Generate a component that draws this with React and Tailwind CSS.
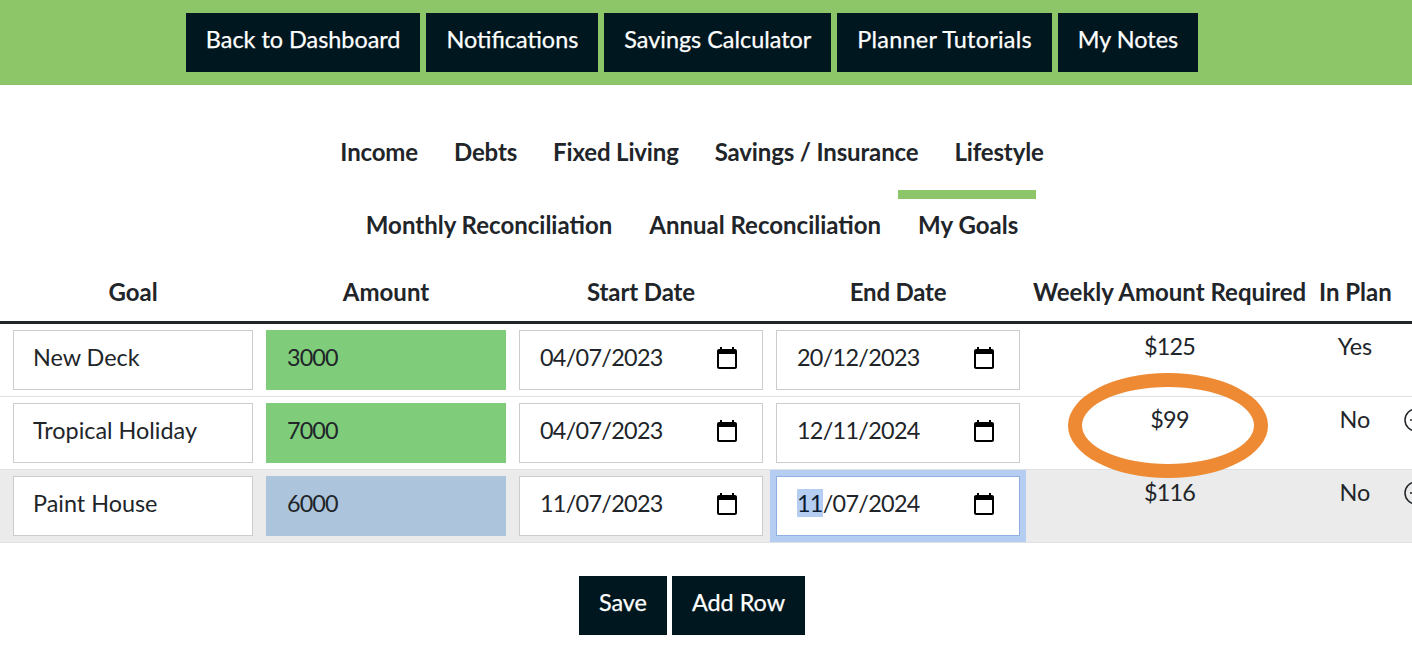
const navItems = ["Back to Dashboard", "Notifications", "Savings Calculator", "Planner Tutorials", "My Notes"];
const tabsOne = ["Income", "Debts", "Fixed Living", "Savings / Insurance", "Lifestyle"];
const tabsTwo = ["Monthly Reconciliation", "Annual Reconciliation", "My Goals"];
const columns = "grid grid-cols-[240px_240px_244px_244px_273px_72px_24px] gap-x-[13px] pl-[13px]";

const rows = [
  { goal: "New Deck", amount: "3000", amountBg: "bg-[#7fcd7b]", start: "04/07/2023", end: "20/12/2023", weekly: "$125", plan: "Yes" },
  { goal: "Tropical Holiday", amount: "7000", amountBg: "bg-[#7fcd7b]", start: "04/07/2023", end: "12/11/2024", weekly: "$99", plan: "No", removable: true },
  { goal: "Paint House", amount: "6000", amountBg: "bg-[#adc5dc]", start: "11/07/2023", end: "11/07/2024", weekly: "$116", plan: "No", removable: true, shaded: true, focused: true },
];

function CalendarIcon() {
  return (
    <svg viewBox="0 0 24 24" className="h-6 w-6 shrink-0" fill="#000" aria-hidden="true">
      <path d="M20 3h-1V1h-2v2H7V1H5v2H4c-1.1 0-2 .9-2 2v16c0 1.1.9 2 2 2h16c1.1 0 2-.9 2-2V5c0-1.1-.9-2-2-2zm0 18H4V8h16v13z" />
    </svg>
  );
}

function TextField({ value, bg = "bg-white border-[#ccc] pl-[19px]" }) {
  return (
    <div className={`flex h-[60px] items-center border pb-[6px] ${bg}`}>{value}</div>
  );
}

function DateField({ value, focused }) {
  return (
    <div
      className={`flex h-[60px] items-center justify-between border bg-white pb-[4px] pl-[20px] pr-[23px] ${
        focused ? "border-[#8fb0e0] shadow-[0_0_0_6px_#b5cdf0]" : "border-[#ccc]"
      }`}
    >
      {focused ? (
        <span className="mb-[2px] tracking-[-0.7px]">
          <span className="bg-[#b4cdf0] text-[#0a1a30]">11</span>/07/2024
        </span>
      ) : (
        <span className="mb-[2px] tracking-[-0.7px]">{value}</span>
      )}
      <CalendarIcon />
    </div>
  );
}

function DarkButton({ children, className = "" }) {
  return (
    <button className={`h-[59px] bg-[#00171f] px-[20px] pb-[8px] text-[23.4px] text-white [-webkit-text-stroke:0.25px_white] ${className}`}>{children}</button>
  );
}

export default function App() {
  return (
    <div
      className="relative h-[660px] w-[1412px] overflow-hidden bg-white text-[23.4px] leading-[36px] text-[#212529]"
      style={{ fontFamily: "Lato, 'Noto Sans', sans-serif" }}
    >
      <header className="flex h-[85px] items-start justify-center gap-[6px] bg-[#8cc668] pr-[28px] pt-[13px]">
        {navItems.map((item) => (
          <DarkButton key={item} className={item === "Planner Tutorials" ? "tracking-[0.25px]" : ""}>{item}</DarkButton>
        ))}
      </header>

      <nav className="relative pr-[28px] pt-[31px] text-[24px] font-bold">
        <div className="flex h-[73px] items-start justify-center gap-[36px] pt-[18px] tracking-[-0.15px]">
          {tabsOne.map((tab) => (
            <span key={tab}>{tab}</span>
          ))}
        </div>
        <div className="flex h-[73px] items-start justify-center gap-[37px] pt-[18px]">
          {tabsTwo.map((tab) => (
            <span key={tab}>{tab}</span>
          ))}
        </div>
        <span className="absolute left-[898px] top-[105px] h-[9px] w-[138px] bg-[#8cc668]" />
      </nav>

      <div className={`${columns} h-[62px] items-center border-b-[3px] border-[#212529] text-center text-[24px] font-bold`}>
        <div>Goal</div>
        <div>Amount</div>
        <div className="tracking-[-0.1px]">Start Date</div>
        <div className="tracking-[-0.2px]">End Date</div>
        <div className="whitespace-nowrap">Weekly Amount Required</div>
        <div className="whitespace-nowrap">In Plan</div>
      </div>

      {rows.map((row) => (
        <div
          key={row.goal}
          className={`${columns} border-b border-[#dee2e6] py-[6px] ${row.shaded ? "bg-[#ebebeb]" : ""}`}
        >
          <TextField value={row.goal} />
          <TextField value={<span className="tracking-[-0.9px]">{row.amount}</span>} bg={`${row.amountBg} border-transparent pl-[20px]`} />
          <DateField value={row.start} />
          <DateField value={row.end} focused={row.focused} />
          <div className="text-center leading-[33px] tracking-[-0.8px]">{row.weekly}</div>
          <div className="text-center leading-[33px]">{row.plan}</div>
          {row.removable && (
            <svg viewBox="0 0 24 24" className="mt-[5px] h-6 w-6" fill="none" stroke="#212529" strokeWidth="1.5" aria-hidden="true">
              <circle cx="12" cy="12" r="11" />
              <path d="M6 12h12" />
            </svg>
          )}
        </div>
      ))}

      <div className="flex justify-center gap-[5px] pr-[28px] pt-[33px]">
        <DarkButton>Save</DarkButton>
        <DarkButton>Add Row</DarkButton>
      </div>

      <span className="absolute left-[1068px] top-[373px] h-[105px] w-[200px] rounded-[50%] border-[14px] border-[#ee8a33]" />
    </div>
  );
}
